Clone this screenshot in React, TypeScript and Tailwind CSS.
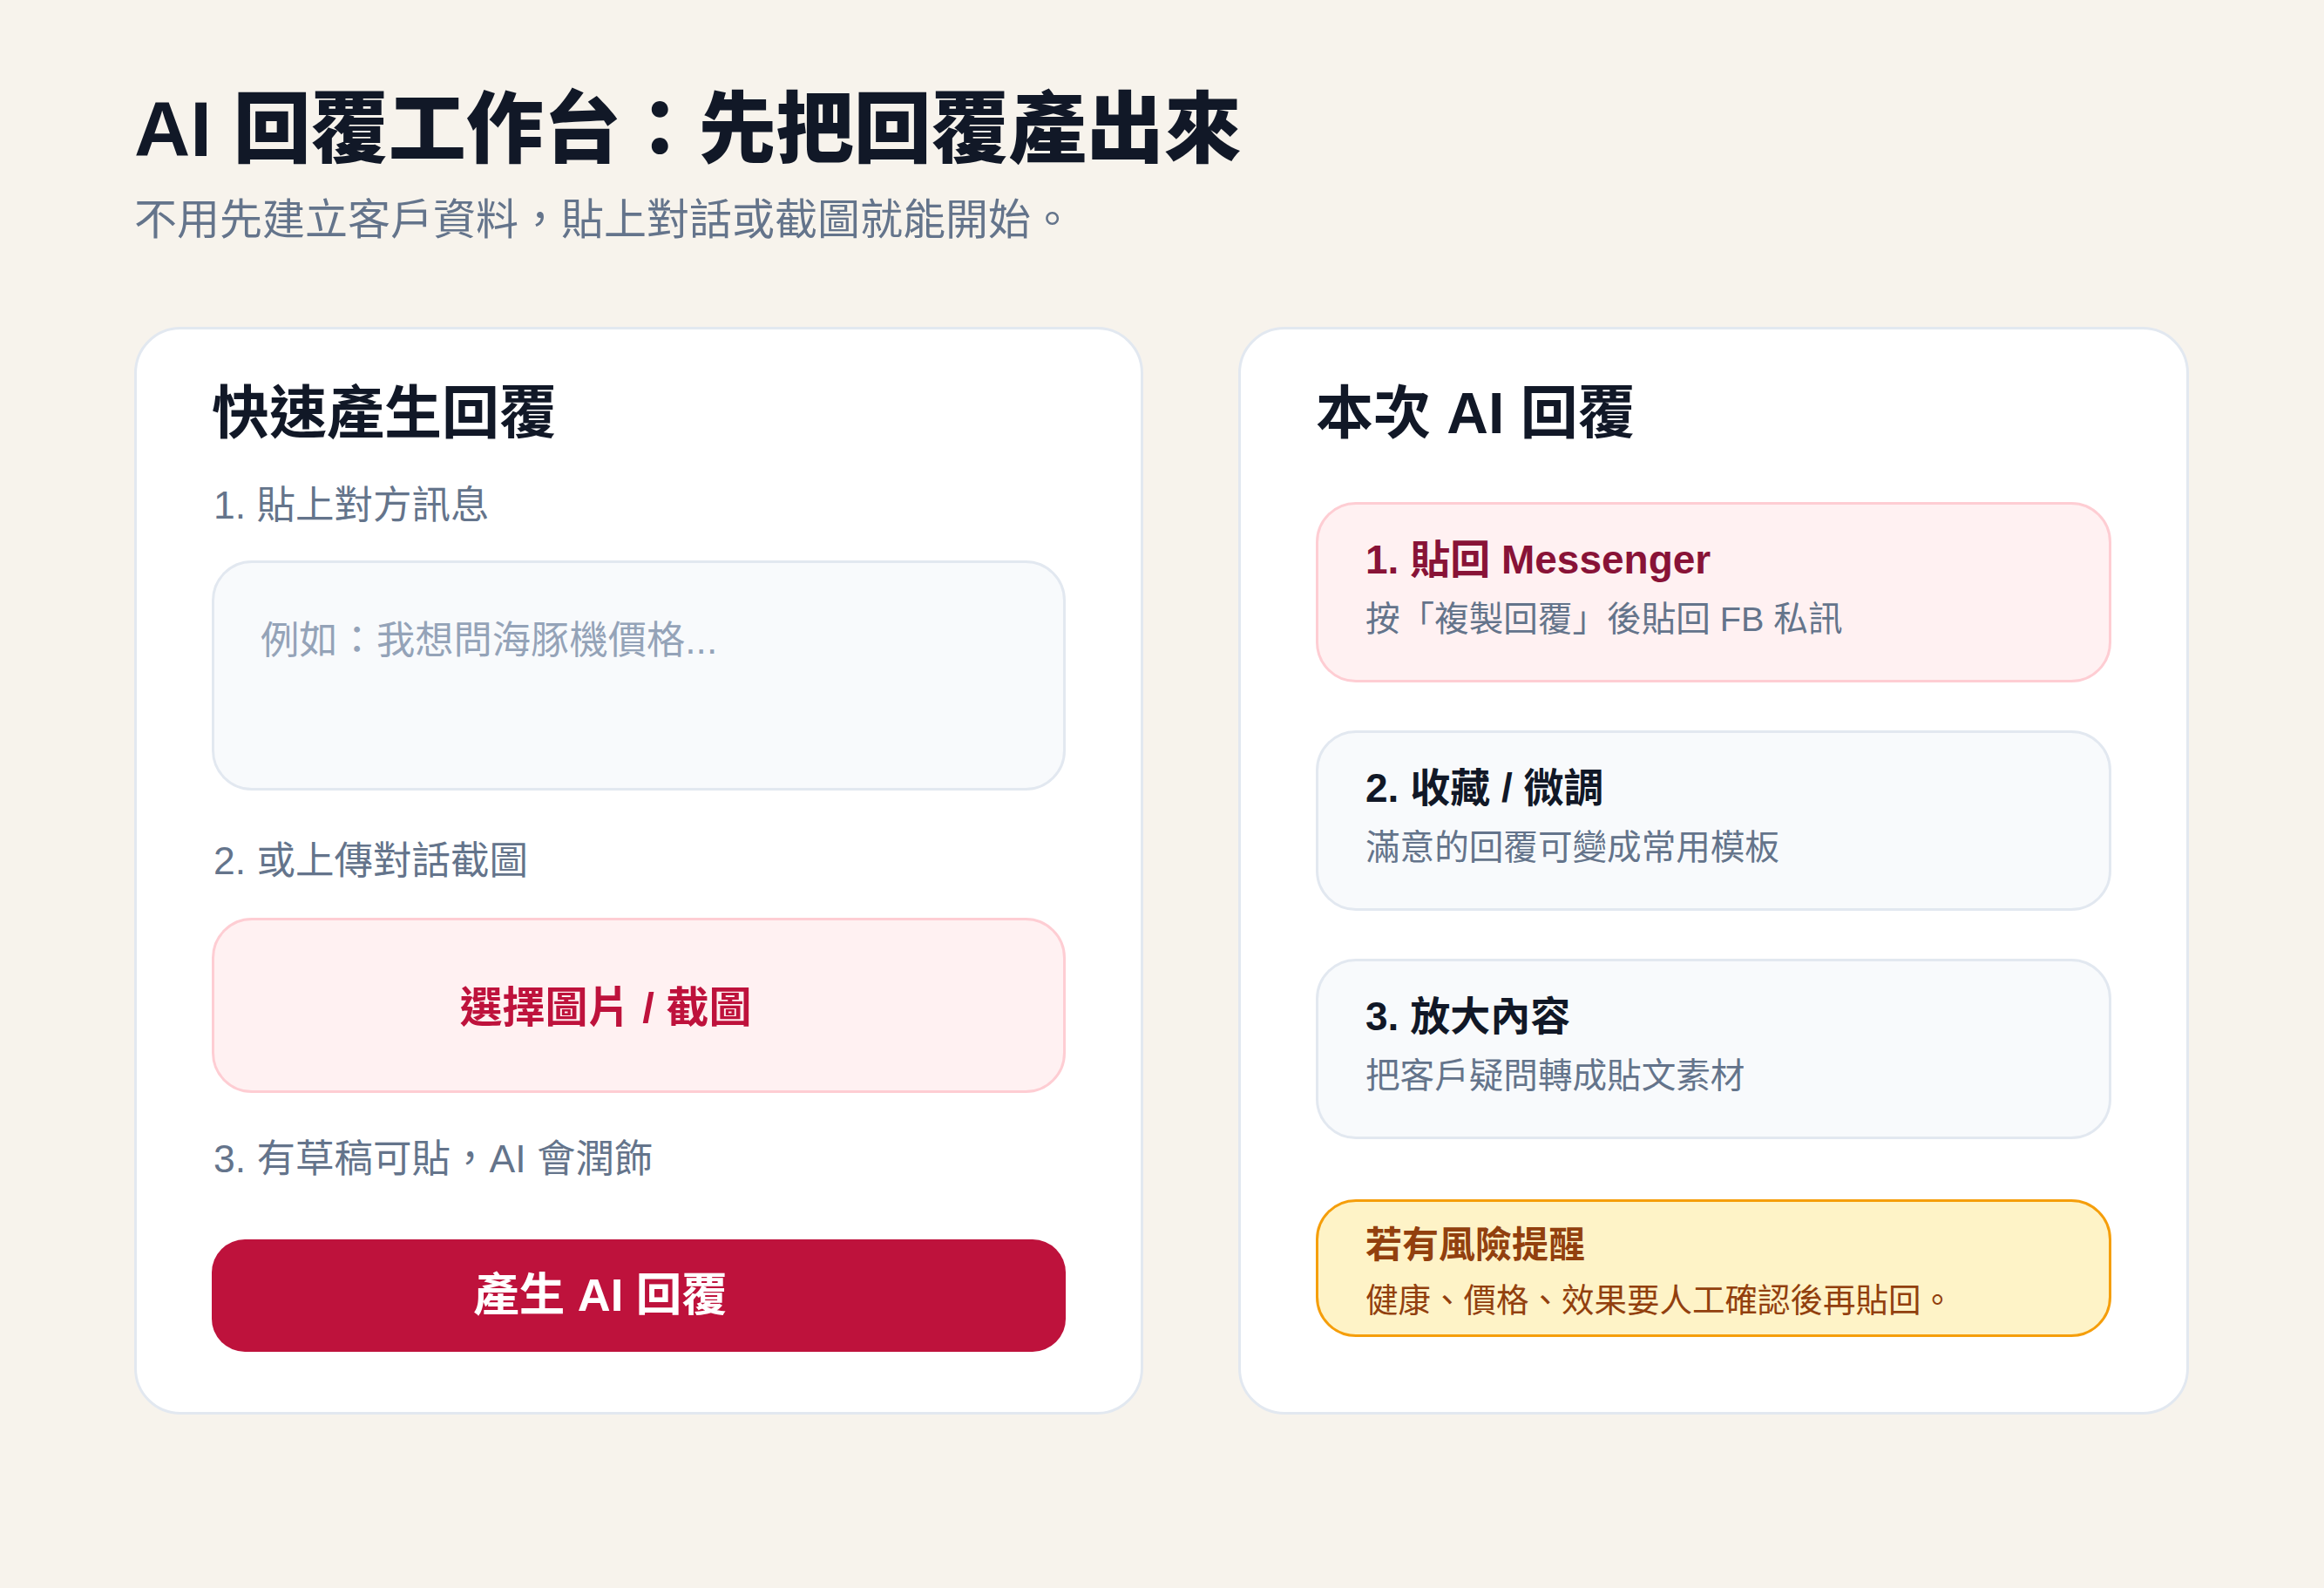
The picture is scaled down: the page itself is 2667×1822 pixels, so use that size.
import React from "react";

const FONT = '"Liberation Sans", "Noto Sans CJK TC", "Noto Sans CJK SC", sans-serif';

function InfoBox({
  title,
  sub,
  tone,
}: {
  title: string;
  sub: string;
  tone: "rose" | "slate";
}) {
  const box =
    tone === "rose"
      ? "bg-[#fff1f2] border-[#fecdd3]"
      : "bg-[#f8fafc] border-[#e2e8f0]";
  const titleColor = tone === "rose" ? "text-[#881337]" : "text-[#111827]";
  return (
    <div className={`h-[207px] rounded-[46px] border-[3px] px-[54px] pt-[33px] ${box}`}>
      <div className={`text-[46px] font-bold leading-[60px] ${titleColor}`}>{title}</div>
      <div className="mt-[10px] text-[39.6px] leading-[56px] text-[#64748b]">{sub}</div>
    </div>
  );
}

export default function App() {
  return (
    <div className="min-h-screen w-full bg-[#f7f3ec]" style={{ fontFamily: FONT }}>
      <div className="px-[154px] pt-[95px] pb-[199px]">
        <h1 className="text-[89px] font-extrabold leading-[106px] text-[#111827]">
          AI 回覆工作台：先把回覆產出來
        </h1>
        <p className="mt-[15px] text-[49px] leading-[72px] text-[#64748b]">
          不用先建立客戶資料，貼上對話或截圖就能開始。
        </p>

        <div className="mt-[87px] grid grid-cols-[1158px_1091px] gap-x-[109px]">
          {/* Left card */}
          <div className="flex flex-col rounded-[53px] border-[3px] border-[#e2e8f0] bg-white px-[86px] pt-[56px] pb-[69px]">
            <h2 className="text-[66px] font-bold leading-[80px] text-[#111827]">快速產生回覆</h2>
            <div className="mt-[36px] pl-[2px] text-[44.5px] leading-[60px] text-[#64748b]">1. 貼上對方訊息</div>
            <textarea
              className="mt-[33px] h-[264px] w-full resize-none rounded-[46px] border-[3px] border-[#e2e8f0] bg-[#f8fafc] pl-[53px] pr-[50px] pt-[56px] text-[44.3px] leading-[66px] text-[#334155] outline-none placeholder:text-[#94a3b8]"
              placeholder="例如：我想問海豚機價格..."
            />
            <div className="mt-[51px] pl-[2px] text-[44.5px] leading-[60px] text-[#64748b]">2. 或上傳對話截圖</div>
            <button className="mt-[35px] flex h-[201px] w-full items-center justify-center rounded-[46px] border-[3px] border-[#fecdd3] bg-[#fff1f2] pr-[76px] pt-[6px] text-[49px] font-bold text-[#be123c]">
              選擇圖片 / 截圖
            </button>
            <div className="mt-[46px] pl-[2px] text-[44.5px] leading-[60px] text-[#64748b]">3. 有草稿可貼，AI 會潤飾</div>
            <button className="mt-[62px] flex h-[129px] w-full items-center justify-center rounded-[38px] bg-[#be123c] pr-[88px] text-[52.5px] font-bold text-white">
              產生 AI 回覆
            </button>
          </div>

          {/* Right card */}
          <div className="flex flex-col rounded-[53px] border-[3px] border-[#e2e8f0] bg-white px-[86px] pt-[56px] pb-[86px]">
            <h2 className="text-[66px] font-bold leading-[80px] text-[#111827]">本次 AI 回覆</h2>
            <div className="mt-[62px] flex flex-col gap-[55px]">
              <InfoBox tone="rose" title="1. 貼回 Messenger" sub="按「複製回覆」後貼回 FB 私訊" />
              <InfoBox tone="slate" title="2. 收藏 / 微調" sub="滿意的回覆可變成常用模板" />
              <InfoBox tone="slate" title="3. 放大內容" sub="把客戶疑問轉成貼文素材" />
            </div>
            <div className="mt-[69px] h-[158px] rounded-[46px] border-[3px] border-[#f59e0b] bg-[#fef3c7] px-[54px] pt-[22px]">
              <div className="text-[42px] font-bold leading-[56px] text-[#92400e]">若有風險提醒</div>
              <div className="mt-[9px] text-[37.5px] leading-[52px] text-[#92400e]">
                健康、價格、效果要人工確認後再貼回。
              </div>
            </div>
          </div>
        </div>
      </div>
    </div>
  );
}
